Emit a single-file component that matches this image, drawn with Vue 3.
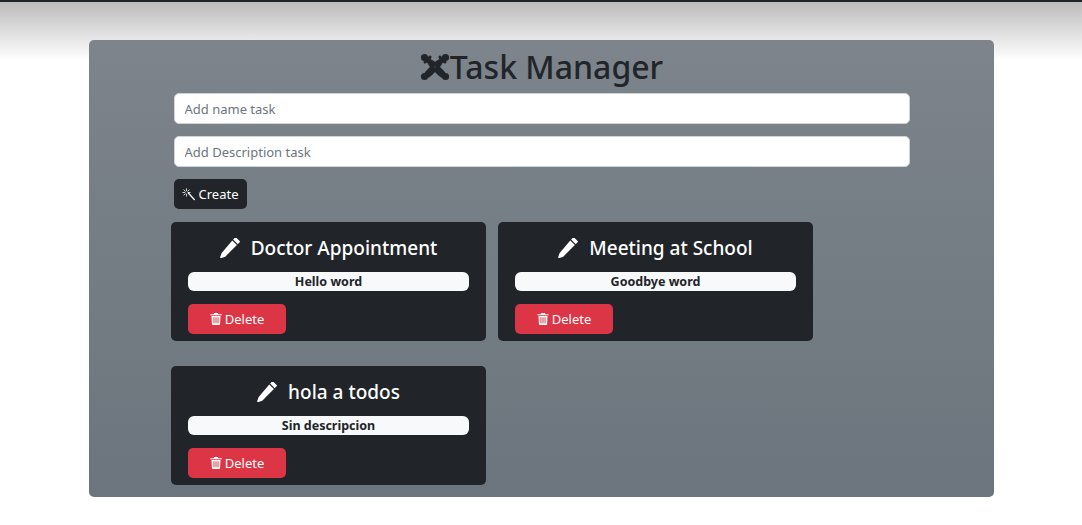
<script setup>
const tasks = [
  { name: 'Doctor Appointment', desc: 'Hello word' },
  { name: 'Meeting at School', desc: 'Goodbye word' },
  { name: 'hola a todos', desc: 'Sin descripcion' },
]
</script>

<template>
  <div class="page">
    <main class="panel">
      <h1 class="title">
        <svg class="logo" viewBox="0 0 30 30" aria-hidden="true">
          <g fill="none" stroke="#212529" stroke-linecap="round">
            <path d="M5 6 L13 14 M25 24 L17 16 M25 6 L17 14 M5 24 L13 16" stroke-width="3.4" />
            <path d="M5 10 C9 7 12 9 15 12 L22 19 C24 21 25 22 24 25" stroke-width="3" />
            <path d="M20 5 C23 9 21 12 18 15 L11 22 C9 24 8 25 5 24" stroke-width="3" />
            <path d="M10 5 C7 9 9 12 12 15 L19 22 C21 24 22 25 25 24" stroke-width="3" />
            <path d="M25 10 C21 7 18 9 15 12 L8 19 C6 21 5 22 6 25" stroke-width="3" />
          </g>
          <g fill="#212529">
            <circle cx="4.5" cy="5.5" r="3.6" />
            <circle cx="25.5" cy="5.5" r="3.6" />
            <circle cx="4.5" cy="24.5" r="3.6" />
            <circle cx="25.5" cy="24.5" r="3.6" />
          </g>
        </svg>
        <span>Task Manager</span>
      </h1>
      <form class="form" @submit.prevent>
        <input class="field" type="text" placeholder="Add name task" />
        <input class="field" type="text" placeholder="Add Description task" />
        <button class="btn create" type="submit">
          <svg class="ico" viewBox="0 0 16 16" aria-hidden="true">
            <path fill="#fff" d="M6.6 6.1 7.7 5l8 8.6a.8.8 0 0 1-1.2 1.2z" />
            <path stroke="#fff" stroke-width="1" stroke-linecap="round" d="M5.5 1v2.4M5.5 7.6V10M1 5.5h2.4M7.6 5.5H10M2.3 2.3 4 4M8.7 2.3 7 4M2.3 8.7 4 7" />
          </svg>
          Create
        </button>
      </form>
      <section class="grid">
        <article v-for="t in tasks" :key="t.name" class="task">
          <h3 class="task-title">
            <svg class="pencil" viewBox="0 0 16 16" aria-hidden="true">
              <path fill="#fff" d="M12.15.15a.5.5 0 0 1 .7 0l3 3a.5.5 0 0 1 0 .7L14.2 5.5 10.5 1.8zM9.8 2.5l3.7 3.7-9.3 9.3a.5.5 0 0 1-.17.11l-3.3 1.2-.7-.7 1.2-3.3a.5.5 0 0 1 .11-.17z" transform="translate(0 -.6)" />
            </svg>
            <span>{{ t.name }}</span>
          </h3>
          <p class="desc">{{ t.desc }}</p>
          <button class="btn delete" type="button">
            <svg class="trash" viewBox="0 0 16 16" aria-hidden="true">
              <path fill="#fff" fill-rule="evenodd" d="M5.5 0h5l.6 1.5H15a.8.8 0 0 1 0 1.6H1a.8.8 0 0 1 0-1.6h3.900zM2 4h12l-.6 11a1 1 0 0 1-1 1H3.600a1 1 0 0 1-1-1zm2.600 1.800v8h1.300v-8zm2.750 0v8h1.300v-8zm2.750 0v8h1.300v-8z" />
            </svg>
            Delete
          </button>
        </article>
      </section>
    </main>
  </div>
</template>

<style>
html, body { margin: 0; background: #fff; }
</style>

<style scoped>
.page {
  box-sizing: border-box;
  height: 525px;
  padding-top: 38px;
  border-top: 2px solid #212529;
  background: linear-gradient(#bcbcbc, #fff) no-repeat 0 0 / 100% 58px;
  font-family: "Noto Sans", "Open Sans", sans-serif;
  color: #212529;
}
.panel {
  box-sizing: border-box;
  width: 905px;
  height: 457px;
  margin-left: 89px;
  border-radius: 5px;
  background: linear-gradient(#7d848b, #6c757d);
  background-color: #6c757d;
  overflow: hidden;
}
.title {
  display: flex;
  justify-content: center;
  align-items: center;
  margin: 0;
  height: 53px;
  font-size: 32px;
  font-weight: 500;
  line-height: 53px;
}
.logo { width: 30px; height: 30px; flex: none; }
.form {
  display: flex;
  flex-direction: column;
  align-items: flex-start;
  gap: 12px;
  width: 736px;
  margin: 0 auto;
}
.field {
  box-sizing: border-box;
  width: 100%;
  height: 31px;
  padding: 0 10px;
  border: 1px solid #ced4da;
  border-radius: 5px;
  background: #fff;
  font: 13px "Noto Sans", "Open Sans", sans-serif;
  color: #212529;
}
.field::placeholder { color: #6c757d; opacity: 1; }
.btn {
  display: inline-flex;
  align-items: center;
  justify-content: center;
  box-sizing: border-box;
  height: 30px;
  border: 0;
  border-radius: 5px;
  color: #fff;
  font: 13px "Noto Sans", "Open Sans", sans-serif;
}
.create { width: 73px; background: #212529; gap: 4px; }
.ico { width: 13px; height: 13px; }
.grid {
  display: grid;
  grid-template-columns: 315px 315px;
  gap: 25px 12px;
  margin: 13px 0 0 82px;
}
.task {
  box-sizing: border-box;
  height: 119px;
  padding: 13px 17px 0;
  border-radius: 5px;
  background: #212529;
}
.task-title {
  display: flex;
  justify-content: center;
  align-items: center;
  gap: 11px;
  margin: 0;
  height: 26px;
  font-size: 19px;
  font-weight: 500;
  line-height: 26px;
  color: #fff;
}
.pencil { width: 20px; height: 20px; flex: none; }
.desc {
  height: 19px;
  margin: 11px 0 13px;
  border-radius: 6px;
  background: #f8f9fa;
  color: #212529;
  font-size: 12.500px;
  font-weight: 700;
  line-height: 19px;
  text-align: center;
}
.delete { width: 98px; background: #dc3545; gap: 3px; }
.trash { width: 12px; height: 14px; }
</style>
